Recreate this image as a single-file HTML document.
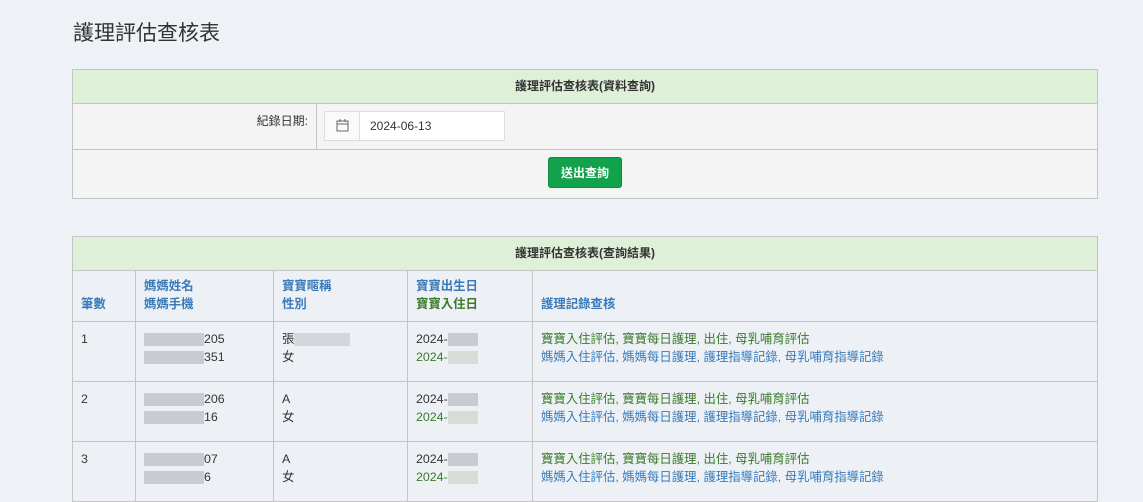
<!DOCTYPE html>
<html><head><meta charset="utf-8"><style>
body{margin:0;background:#eef1f5;font-family:"Liberation Sans","Noto Sans CJK TC",sans-serif;font-size:12px;color:#333;width:1143px;height:501px;overflow:hidden;position:relative}
h1{position:absolute;left:73px;top:17px;margin:0;font-size:21px;font-weight:normal;color:#333}
.box{position:absolute;left:72px;width:1026px;border:1px solid #c4c4c4;box-sizing:border-box}
.hd{background:#dff0d8;text-align:center;font-weight:bold;height:33px;line-height:33px;border-bottom:1px solid #c4c4c4;font-size:12px}
.r1{height:45px;background:#f4f4f4;border-bottom:1px solid #c4c4c4;position:relative}
.r2{height:48px;background:#f4f4f4;position:relative}
.lbl{position:absolute;left:0;width:235px;height:45px;border-right:1px solid #c4c4c4;text-align:right;padding-right:8px;line-height:34px}
.inp{position:absolute;left:251px;top:7px;width:181px;height:30px;border:1px solid #ddd;background:#fff;box-sizing:border-box}
.inp .ic{position:absolute;left:0;top:0;width:34px;height:28px;border-right:1px solid #ddd;background:#fafafa}
.inp .v{position:absolute;left:45px;top:7px;font-size:12px}
.btn{position:absolute;left:475px;top:7px;width:74px;height:31px;background:#13a24c;border-radius:3px;color:#fff;font-weight:bold;text-align:center;line-height:31px;border:1px solid #0d8a3e;box-sizing:border-box}
table{border-collapse:collapse;width:1026px;position:absolute;left:72px;top:270px;background:#edf1f6}
td{border:1px solid #c4c4c4;vertical-align:top;padding:0 8px;font-size:12.4px;line-height:18px}
.th td{vertical-align:bottom;color:#3a7ab8;font-weight:bold;height:42px;padding-bottom:8px}
.g{color:#3b7a2a}
.row td{height:60px;padding-top:8px;box-sizing:border-box}
.bl{display:inline-block;height:13px;background:#c8cbd0;vertical-align:middle}
.lk{color:#3b7a2a}.lk2{color:#3a7ab8}
</style></head><body>
<h1>護理評估查核表</h1>
<div class="box" style="top:69px">
<div class="hd">護理評估查核表(資料查詢)</div>
<div class="r1"><div class="lbl">紀錄日期:</div>
<div class="inp"><div class="ic"><svg width="34" height="28"><rect x="12" y="9" width="11" height="10" fill="none" stroke="#666"/><line x1="12" y1="12" x2="23" y2="12" stroke="#666"/><line x1="15" y1="7" x2="15" y2="10" stroke="#666"/><line x1="20" y1="7" x2="20" y2="10" stroke="#666"/></svg></div><div class="v">2024-06-13</div></div></div>
<div class="r2"><div class="btn">送出查詢</div></div>
</div>
<div class="box" style="top:236px;border-bottom:none"><div class="hd" style="border-bottom:none">護理評估查核表(查詢結果)</div></div>
<table>
<tr class="th"><td style="width:46px">筆數</td><td style="width:121px">媽媽姓名<br>媽媽手機</td><td style="width:117px">寶寶暱稱<br>性別</td><td style="width:108px">寶寶出生日<br><span class="g">寶寶入住日</span></td><td>護理記錄查核</td></tr>
<tr class="row"><td>1</td><td><span class="bl" style="width:60px"></span>205<br><span class="bl" style="width:60px"></span>351</td><td>張<span class="bl" style="width:56px;background:#d3d6da"></span><br>女</td><td>2024-<span class="bl" style="width:30px"></span><br><span class="g">2024-</span><span class="bl" style="width:30px;background:#d6dcd6"></span></td><td><span class="lk">寶寶入住評估, 寶寶每日護理, 出住, 母乳哺育評估</span><br><span class="lk2">媽媽入住評估, 媽媽每日護理, 護理指導記錄, 母乳哺育指導記錄</span></td></tr>
<tr class="row"><td>2</td><td><span class="bl" style="width:60px"></span>206<br><span class="bl" style="width:60px"></span>16</td><td>A<br>女</td><td>2024-<span class="bl" style="width:30px"></span><br><span class="g">2024-</span><span class="bl" style="width:30px;background:#d6dcd6"></span></td><td><span class="lk">寶寶入住評估, 寶寶每日護理, 出住, 母乳哺育評估</span><br><span class="lk2">媽媽入住評估, 媽媽每日護理, 護理指導記錄, 母乳哺育指導記錄</span></td></tr>
<tr class="row"><td>3</td><td><span class="bl" style="width:60px"></span>07<br><span class="bl" style="width:60px"></span>6</td><td>A<br>女</td><td>2024-<span class="bl" style="width:30px"></span><br><span class="g">2024-</span><span class="bl" style="width:30px;background:#d6dcd6"></span></td><td><span class="lk">寶寶入住評估, 寶寶每日護理, 出住, 母乳哺育評估</span><br><span class="lk2">媽媽入住評估, 媽媽每日護理, 護理指導記錄, 母乳哺育指導記錄</span></td></tr>
</table>
</body></html>
